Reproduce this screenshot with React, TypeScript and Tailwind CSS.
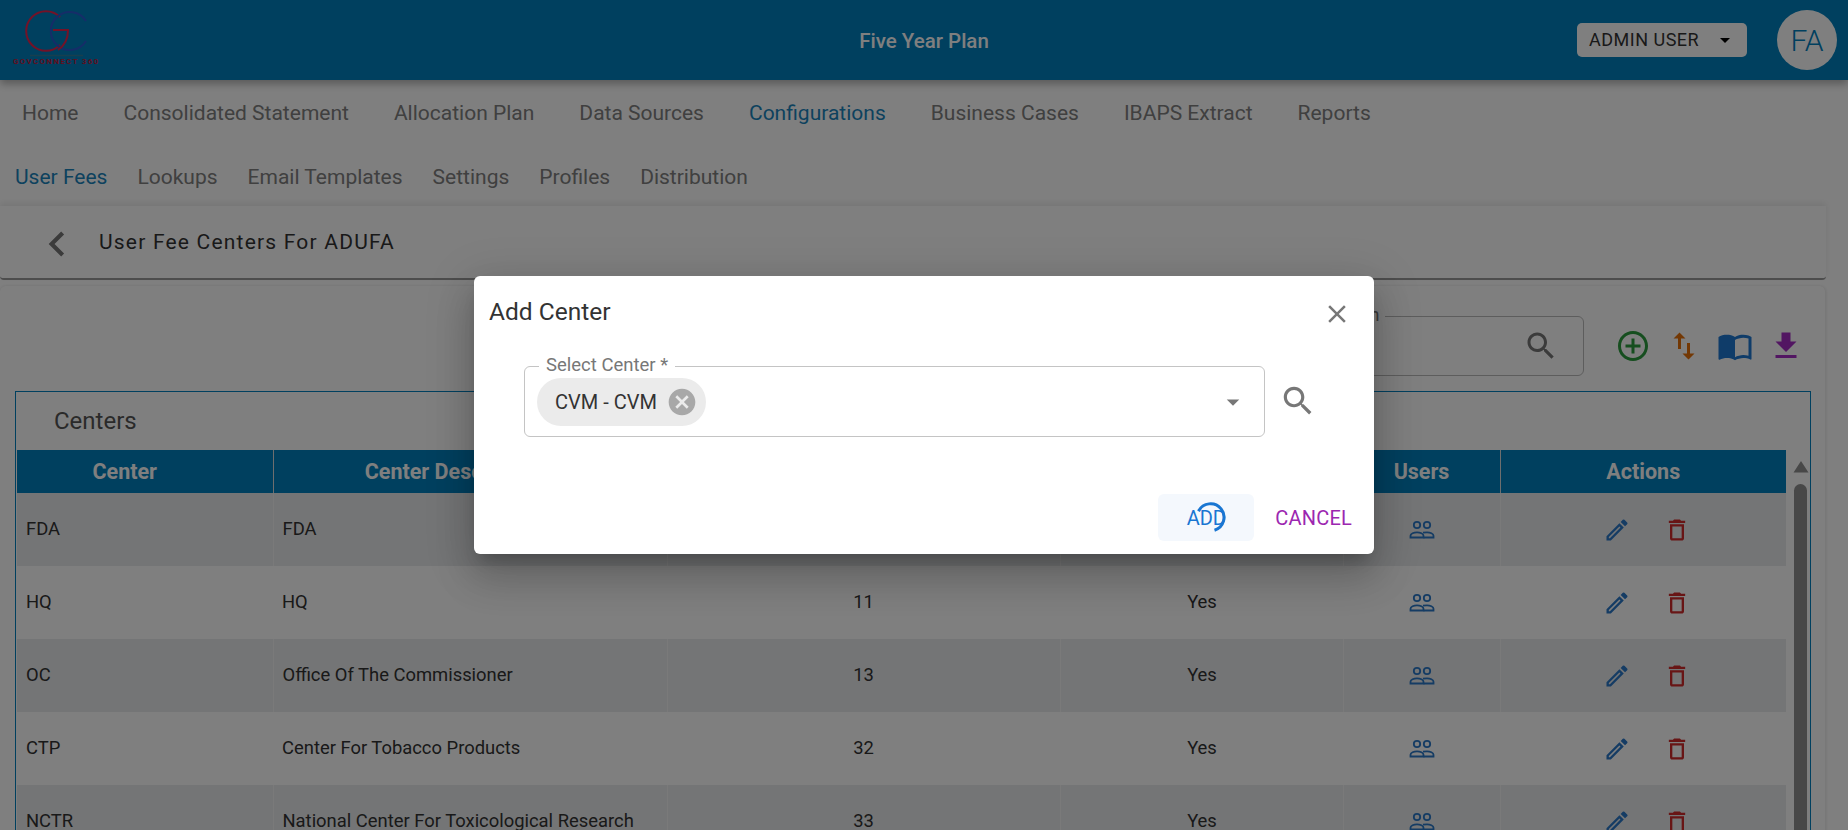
import React from "react";

const P = {
  search: "M15.5 14h-.79l-.28-.27C15.41 12.59 16 11.11 16 9.5 16 5.91 13.09 3 9.5 3S3 5.91 3 9.5 5.91 16 9.5 16c1.61 0 3.09-.59 4.23-1.57l.27.28v.79l5 4.99L20.49 19l-4.99-5zm-6 0C7.01 14 5 11.99 5 9.5S7.01 5 9.5 5 14 7.01 14 9.5 11.99 14 9.5 14z",
  close: "M19 6.41 17.59 5 12 10.59 6.41 5 5 6.41 10.59 12 5 17.59 6.41 19 12 13.41 17.59 19 19 17.59 13.41 12z",
  cancel: "M12 2C6.47 2 2 6.47 2 12s4.47 10 10 10 10-4.47 10-10S17.53 2 12 2zm5 13.59L15.59 17 12 13.41 8.41 17 7 15.59 10.59 12 7 8.41 8.41 7 12 10.59 15.59 7 17 8.41 13.41 12 17 15.59z",
  drop: "M7 10l5 5 5-5z",
  add: "M13 7h-2v4H7v2h4v4h2v-4h4v-2h-4V7zm-1-5C6.48 2 2 6.48 2 12s4.48 10 10 10 10-4.48 10-10S17.52 2 12 2zm0 18c-4.41 0-8-3.59-8-8s3.59-8 8-8 8 3.59 8 8-3.59 8-8 8z",
  swap: "M16 17.01V10h-2v7.01h-3L15 21l4-3.99h-3zM9 3 5 6.99h3V14h2V6.99h3L9 3z",
  book: "M21 5c-1.11-.35-2.33-.5-3.5-.5-1.95 0-4.05.4-5.5 1.5-1.45-1.1-3.55-1.5-5.5-1.5S2.45 4.9 1 6v14.65c0 .25.25.5.5.5.1 0 .15-.05.25-.05C3.1 20.45 5.05 20 6.5 20c1.95 0 4.05.4 5.5 1.5 1.35-.85 3.8-1.5 5.5-1.5 1.65 0 3.35.3 4.75 1.05.1.05.15.05.25.05.25 0 .5-.25.5-.5V6c-.6-.45-1.25-.75-2-1zm0 13.5c-1.1-.35-2.3-.5-3.5-.5-1.7 0-4.15.65-5.5 1.5V8c1.35-.85 3.8-1.5 5.5-1.5 1.2 0 2.4.15 3.5.5v11.5z",
  download: "M19 9h-4V3H9v6H5l7 7 7-7zM5 18v2h14v-2H5z",
  edit: "M3 17.25V21h3.75L17.81 9.94l-3.75-3.75L3 17.25zM5.92 19H5v-.92l9.06-9.06.92.92L5.92 19zM20.71 7.04a.996.996 0 0 0 0-1.41l-2.34-2.34a.996.996 0 0 0-1.41 0l-1.83 1.83 3.75 3.75 1.83-1.83z",
  trash: "M6 19c0 1.1.9 2 2 2h8c1.1 0 2-.9 2-2V7H6v12zM8 9h8v10H8V9zm7.5-5-1-1h-5l-1 1H5v2h14V4z",
  back: "M15.41 7.41 14 6l-6 6 6 6 1.41-1.41L10.83 12z",
};

function Icon({ d, className }: { d: string; className: string }) {
  return (
    <svg viewBox="0 0 24 24" fill="currentColor" className={className}>
      <path d={d} />
    </svg>
  );
}

function People() {
  return (
    <svg viewBox="0 0 28 28" fill="none" stroke="currentColor" strokeWidth="1.8" className="w-[28px] h-[28px] text-[#2a78c8]">
      <circle cx="9" cy="9" r="3.2" />
      <circle cx="19" cy="9" r="3.2" />
      <path d="M2.5 21.5v-1.8c0-2 3.4-3.4 6.5-3.4s6.5 1.4 6.5 3.4v1.8z" />
      <path d="M15 16.6c1.2-.2 2.6-.3 4-.3 3.1 0 6.5 1.4 6.5 3.4v1.8h-10" />
    </svg>
  );
}

function Logo() {
  return (
    <div className="relative w-[110px] h-[80px]">
      <svg viewBox="0 0 110 80" fill="none" className="w-[110px] h-[80px]">
        <path d="M60 17 A19.8 19.8 0 1 0 60 45" stroke="#e8244e" strokeWidth="2" />
        <path d="M86 21 A19 19 0 1 0 86 41" stroke="#2a5ad0" strokeWidth="2" />
        <path d="M53 30 H68 C68 40 64 46 58 50" stroke="#e8244e" strokeWidth="2" />
        <path d="M30 55.5 H83" stroke="#2f7f9e" strokeWidth="1.5" />
      </svg>
      <div className="absolute left-[13px] top-[57px] text-[8px] leading-[10px] tracking-[1.3px] font-bold whitespace-nowrap text-[#c01c3c]">
        GOVCONNECT 360
      </div>
    </div>
  );
}

const nav1 = ["Home", "Consolidated Statement", "Allocation Plan", "Data Sources", "Configurations", "Business Cases", "IBAPS Extract", "Reports"];
const nav2 = ["User Fees", "Lookups", "Email Templates", "Settings", "Profiles", "Distribution"];
const rows = [
  ["FDA", "FDA", "10", "Yes"],
  ["HQ", "HQ", "11", "Yes"],
  ["OC", "Office Of The Commissioner", "13", "Yes"],
  ["CTP", "Center For Tobacco Products", "32", "Yes"],
  ["NCTR", "National Center For Toxicological Research", "33", "Yes"],
];

export default function App() {
  return (
    <div className="relative h-[830px] w-[1848px] overflow-hidden bg-white font-['Roboto',sans-serif]">
      <header className="relative z-10 h-[80px] bg-[#0080bf] grid grid-cols-[1fr_auto_1fr] items-center shadow-[0_4px_8px_rgba(0,0,0,0.3)]">
        <div className="h-[80px]"><Logo /></div>
        <div className="text-center text-white text-[20.5px] font-medium pt-[2px]">Five Year Plan</div>
        <div className="flex items-center justify-end">
          <button className="w-[170px] h-[34px] mr-[30px] rounded-[5px] bg-white flex items-center justify-between pl-[12px] pr-[10px] text-[#333] text-[18px] tracking-[0.5px]">
            <span className="pb-[2px]">ADMIN USER</span>
            <Icon d={P.drop} className="w-[24px] h-[24px] text-black" />
          </button>
          <div className="w-[60px] h-[60px] mr-[11px] rounded-full bg-white flex items-center justify-center text-[#0080bf] text-[30px] font-light">FA</div>
        </div>
      </header>

      <nav className="h-[66px] pt-[1px] flex items-center pl-[22px] gap-[45px] text-[21px] text-[#808080]">
        {nav1.map((n) => (
          <span key={n} className={n === "Configurations" ? "text-[#1a84bd]" : ""}>{n}</span>
        ))}
      </nav>
      <nav className="h-[60px] pt-[3px] flex items-center pl-[15px] gap-[30px] text-[21px] text-[#808080]">
        {nav2.map((n) => (
          <span key={n} className={n === "User Fees" ? "text-[#1a84bd]" : ""}>{n}</span>
        ))}
      </nav>

      <div className="w-[1826px] h-[74px] flex items-center bg-white border-b-2 border-[#9a9a9a] rounded-b-[4px] shadow-[0_-3px_6px_rgba(0,0,0,0.08)]">
        <Icon d={P.back} className="w-[50px] h-[50px] ml-[32px] mt-[3px] text-[#777]" />
        <span className="ml-[17px] mt-[2px] text-[21px] text-[#333] tracking-[1.2px]">User Fee Centers For ADUFA</span>
      </div>

      <main className="w-[1826px] mt-[6px] rounded-t-[6px] border-r border-[#f0f0f0] shadow-[0_0_3px_rgba(0,0,0,0.12)] pl-[15px] pr-[15px]">
        <div className="h-[105px] flex items-start justify-end pt-[30px] pr-[6px]">
          <div className="relative w-[420px] h-[60px] rounded-[6px] border border-[#bbb] flex items-center justify-end pr-[24px]">
            <span className="absolute left-[153px] -top-[12px] bg-white px-[6px] text-[18px] leading-[20px] text-[#777]">Search</span>
            <Icon d={P.search} className="w-[36px] h-[36px] text-[#777]" />
          </div>
          <div className="flex items-center h-[60px] ml-[31px] gap-[15px]">
            <Icon d={P.add} className="w-[36px] h-[36px] text-[#2c9c3e]" />
            <Icon d={P.swap} className="w-[36px] h-[36px] text-[#e67008]" />
            <Icon d={P.book} className="w-[36px] h-[36px] text-[#1e78d2]" />
            <Icon d={P.download} className="w-[36px] h-[36px] text-[#a42cc4]" />
          </div>
        </div>

        <section className="w-[1796px] border border-[#0080bf] pl-[1px]">
          <div className="h-[58px] flex items-center pl-[37px] text-[24px] text-[#555]">Centers</div>
          <div className="flex items-start">
            <table className="w-[1769px] table-fixed border-collapse text-[18.4px] text-[#333]">
              <colgroup>
                <col className="w-[256px]" />
                <col className="w-[394px]" />
                <col className="w-[393px]" />
                <col className="w-[283px]" />
                <col className="w-[157px]" />
                <col className="w-[286px]" />
              </colgroup>
              <thead>
                <tr className="h-[43px] bg-[#0080bf] text-white text-[21.5px]">
                  {["Center", "Center Description", "Center Code", "Active", "Users", "Actions"].map((h, i) => (
                    <th key={h} className={i === 0 ? "pr-[40px] pt-[2px] border-r border-[#ddd] font-bold" : i < 4 ? "pr-[30px] pt-[2px] border-r border-[#ddd] font-bold" : i === 4 ? "pt-[2px] border-r border-[#ddd] font-bold" : "pt-[2px] font-bold"}>{h}</th>
                  ))}
                </tr>
              </thead>
              <tbody>
                {rows.map((r, i) => (
                  <tr key={r[0]} className={i % 2 === 0 ? "h-[73px] bg-[#e8eaec]" : "h-[73px] bg-white"}>
                    <td className={i % 2 === 0 ? "pl-[9px] pb-[2px] border-r border-[#f4f4f4]" : "pl-[9px] pb-[2px]"}>{r[0]}</td>
                    <td className={i % 2 === 0 ? "pl-[9px] pb-[2px] border-r border-[#f4f4f4]" : "pl-[9px] pb-[2px]"}>{r[1]}</td>
                    <td className={i % 2 === 0 ? "text-center pb-[2px] border-r border-[#f4f4f4]" : "text-center pb-[2px]"}>{r[2]}</td>
                    <td className={i % 2 === 0 ? "text-center pb-[2px] pl-[1px] border-r border-[#f4f4f4]" : "text-center pb-[2px] pl-[1px]"}>{r[3]}</td>
                    <td className={i % 2 === 0 ? "border-r border-[#f4f4f4]" : ""}>
                      <div className="flex justify-center"><People /></div>
                    </td>
                    <td>
                      <div className="flex justify-center gap-[32px] pl-[8px]">
                        <Icon d={P.edit} className="w-[28px] h-[28px] text-[#2a78c8]" />
                        <Icon d={P.trash} className="w-[28px] h-[28px] text-[#d02a2a]" />
                      </div>
                    </td>
                  </tr>
                ))}
              </tbody>
            </table>
            <div className="w-[24px] pl-[5px] flex flex-col items-center">
              <svg viewBox="0 0 16 12" className="mt-[11px] w-[16px] h-[12px] text-[#909090]" fill="currentColor">
                <path d="M8 0 L15.5 11.5 H0.5 Z" />
              </svg>
              <div className="mt-[11px] w-[13px] h-[400px] rounded-full bg-[#909090]" />
            </div>
          </div>
        </section>
      </main>

      <div className="absolute inset-0 z-20 bg-black/50" />

      <div className="absolute inset-0 z-30 flex items-center justify-center">
        <div className="relative w-[900px] h-[278px] bg-white rounded-[6px] shadow-[0_11px_15px_-7px_rgba(0,0,0,0.2),0_24px_38px_3px_rgba(0,0,0,0.14),0_9px_46px_8px_rgba(0,0,0,0.12)]">
          <div className="flex items-center justify-between h-[76px] pl-[15px] pr-[22px]">
            <span className="text-[24.5px] text-[#333] pb-[3px]">Add Center</span>
            <Icon d={P.close} className="w-[30px] h-[30px] text-[#777] mb-[1px]" />
          </div>
          <div className="flex items-start pl-[50px] pt-[15px]">
            <div className="relative w-[741px] h-[71px] -mt-[1px] rounded-[6px] border border-[#c4c4c4] flex items-center pl-[12px] pr-[16px] justify-between">
              <span className="absolute left-[14px] -top-[12px] bg-white px-[7px] text-[18.5px] leading-[20px] text-[#777]">Select Center *</span>
              <div className="flex items-center h-[48px] w-[169px] rounded-full bg-[#ebebeb] pl-[18px] pr-[8px] justify-between">
                <span className="text-[20px] text-[#333] whitespace-nowrap">CVM - CVM</span>
                <Icon d={P.cancel} className="w-[32px] h-[32px] text-[#a8a8a8]" />
              </div>
              <Icon d={P.drop} className="w-[30px] h-[30px] text-[#777]" />
            </div>
            <Icon d={P.search} className="ml-[14px] mt-[15px] w-[38px] h-[38px] text-[#777]" />
          </div>
          <div className="absolute right-[22px] bottom-[13px] flex items-center gap-[21px]">
            <div className="relative w-[96px] h-[47px] rounded-[6px] bg-[#f4f8fd] flex items-center justify-center text-[20px] text-[#1976d2]">
              ADD
              <svg viewBox="0 0 30 30" fill="none" className="absolute left-[38px] top-[8px] w-[30px] h-[30px]">
                <path d="M18.5 28.2 A13.5 13.5 0 1 0 2.5 9.2" stroke="#1976d2" strokeWidth="3" />
              </svg>
            </div>
            <span className="text-[20px] text-[#9c27b0] tracking-[0.2px]">CANCEL</span>
          </div>
        </div>
      </div>
    </div>
  );
}
